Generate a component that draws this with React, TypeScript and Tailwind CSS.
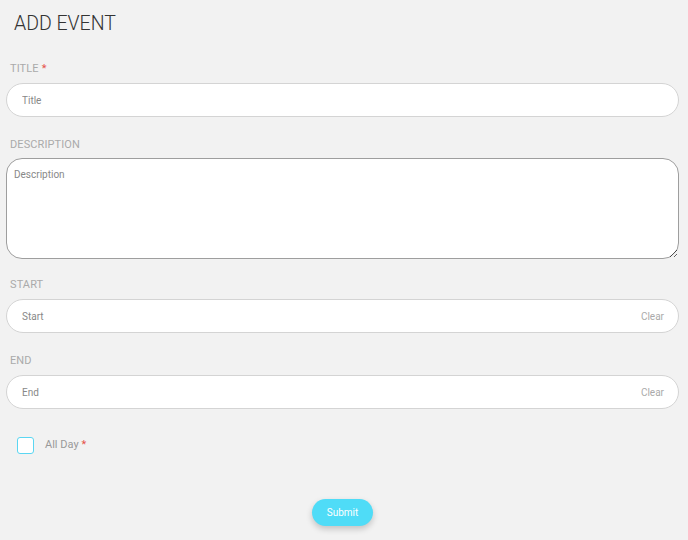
import React from 'react';

const labelCls = "block text-[11px] leading-none text-[#aaa] uppercase tracking-[0.1px] ml-[4px]";

const Field: React.FC<{ label: string; placeholder: string; required?: boolean; clear?: boolean; className?: string }> = ({ label, placeholder, required, clear, className }) => (
  <div className={className}>
    <label className={labelCls}>
      {label}
      {required && <span className="text-[#e5534b] ml-[3px]">*</span>}
    </label>
    <div className="relative mt-[9px]">
      <input
        placeholder={placeholder}
        className="w-full h-[34px] rounded-full bg-white border border-[#d4d4d4] pl-[15px] pr-[60px] text-[10px] text-[#555] placeholder:text-[#888] outline-none"
      />
      {clear && (
        <span className="absolute right-[15px] top-1/2 -translate-y-1/2 text-[10px] text-[#aaa]">Clear</span>
      )}
    </div>
  </div>
);

export default function App() {
  return (
    <div className="min-h-[540px] bg-[#f2f2f2] pl-[6px] pr-[9px] pt-[11px] pb-[14px] font-['Roboto',sans-serif]">
      <h1 className="mt-[2px] ml-[8px] text-[19.5px] font-light leading-[22px] text-[#333]">ADD EVENT</h1>

      <div className="mt-[28px] flex flex-col">
        <Field label="Title" placeholder="Title" required />

        <div className="mt-[22px]">
          <label className={labelCls}>Description</label>
          <textarea
            placeholder="Description"
            className="mt-[8px] block w-full h-[101px] rounded-[16px] bg-white border border-[#9e9e9e] px-[7px] py-[8px] text-[10px] text-[#555] placeholder:text-[#888] outline-none"
          />
        </div>

        <Field className="mt-[20px]" label="Start" placeholder="Start" clear />
        <Field className="mt-[22px]" label="End" placeholder="End" clear />
      </div>

      <div className="mt-[28px] ml-[11px] flex items-center gap-[11px]">
        <span className="w-[17px] h-[17px] rounded-[3px] border border-[#5bd6f2] bg-white" />
        <span className="text-[11px] text-[#999]">
          All Day<span className="text-[#e5534b] ml-[3px]">*</span>
        </span>
      </div>

      <div className="mt-[45px] flex justify-center">
        <button className="h-[27px] w-[61px] rounded-full bg-[#4fdcf7] text-white text-[10px] shadow-[0_3px_6px_rgba(0,0,0,0.2)]">
          Submit
        </button>
      </div>
    </div>
  );
}
